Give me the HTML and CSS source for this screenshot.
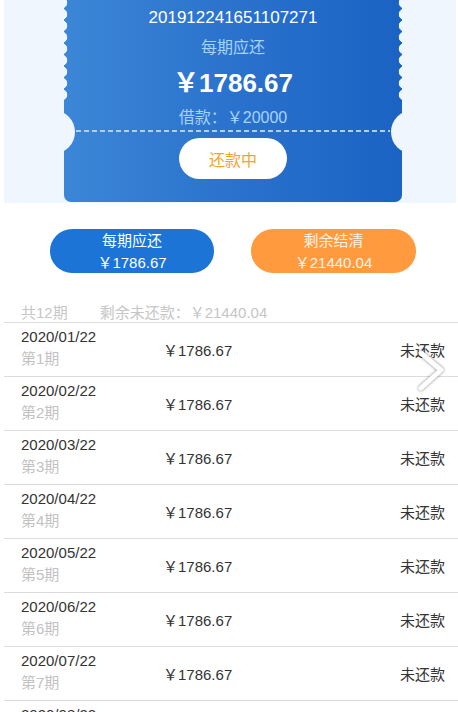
FILE: index.html
```html
<!DOCTYPE html>
<html lang="zh">
<head>
<meta charset="utf-8">
<link rel="stylesheet" href="styles.css">
</head>
<body>
<div class="page">
  <div class="top">
    <div class="card">
      <span class="scallop scallop-left"></span>
      <span class="scallop scallop-right"></span>
      <span class="notch notch-left"></span>
      <span class="notch notch-right"></span>
      <div class="card-no">201912241651107271</div>
      <div class="card-label">每期应还</div>
      <div class="card-amount">￥1786.67</div>
      <div class="card-loan">借款：￥20000</div>
      <div class="card-dash"></div>
      <div class="card-status">还款中</div>
    </div>
  </div>

  <div class="actions">
    <div class="pill pill-blue"><span>每期应还</span><span>￥1786.67</span></div>
    <div class="pill pill-orange"><span>剩余结清</span><span>￥21440.04</span></div>
  </div>

  <div class="summary"><span>共12期</span><span>剩余未还款：￥21440.04</span></div>

  <div class="list">
    <div class="row"><div class="when"><div class="date">2020/01/22</div><div class="term">第1期</div></div><div class="amt">￥1786.67</div><div class="state">未还款</div></div>
    <div class="row"><div class="when"><div class="date">2020/02/22</div><div class="term">第2期</div></div><div class="amt">￥1786.67</div><div class="state">未还款</div></div>
    <div class="row"><div class="when"><div class="date">2020/03/22</div><div class="term">第3期</div></div><div class="amt">￥1786.67</div><div class="state">未还款</div></div>
    <div class="row"><div class="when"><div class="date">2020/04/22</div><div class="term">第4期</div></div><div class="amt">￥1786.67</div><div class="state">未还款</div></div>
    <div class="row"><div class="when"><div class="date">2020/05/22</div><div class="term">第5期</div></div><div class="amt">￥1786.67</div><div class="state">未还款</div></div>
    <div class="row"><div class="when"><div class="date">2020/06/22</div><div class="term">第6期</div></div><div class="amt">￥1786.67</div><div class="state">未还款</div></div>
    <div class="row"><div class="when"><div class="date">2020/07/22</div><div class="term">第7期</div></div><div class="amt">￥1786.67</div><div class="state">未还款</div></div>
    <div class="row"><div class="when"><div class="date">2020/08/22</div><div class="term">第8期</div></div><div class="amt">￥1786.67</div><div class="state">未还款</div></div>
  </div>

  <svg class="chevron" width="34" height="44" viewBox="0 0 34 44">
    <polyline points="7,4 27,21 7,39" fill="none" stroke="#ffffff" stroke-width="5" stroke-linecap="round" stroke-linejoin="round"/>
  </svg>
</div>
</body>
</html>
```

FILE: styles.css
```css
* { box-sizing: border-box; }
html, body { margin: 0; padding: 0; background: #ffffff; }
body {
  font-family: "Liberation Sans", Arial, "Noto Sans CJK SC", sans-serif;
  color: #333333;
  overflow: hidden;
}
.page { position: relative; width: 458px; }

.top {
  margin: 0 2px 0 4px;
  height: 203px;
  background: #eff6fd;
  display: flex;
  padding-left: 60px;
}
.card {
  position: relative;
  width: 338px;
  height: 202px;
  border-radius: 0 0 7px 7px;
  background: linear-gradient(90deg, #3c86d7 0%, #2a72cc 50%, #1a63c3 100%);
  display: flex;
  flex-direction: column;
  align-items: center;
  padding-top: 8px;
}
.scallop {
  position: absolute;
  top: -3px;
  width: 12px;
  height: 104px;
  background: radial-gradient(circle at 6px 50%, #eff6fd 5px, rgba(239,246,253,0) 5.6px);
  background-size: 12px 11.5px;
}
.scallop-left { left: -8px; }
.scallop-right { right: -8px; }
.notch {
  position: absolute;
  top: 110px;
  width: 44px;
  height: 44px;
  border-radius: 50%;
  background: #eff6fd;
}
.notch-left { left: -33px; }
.notch-right { right: -33px; }

.card-no {
  font-size: 17px;
  line-height: 20px;
  color: #ffffff;
}
.card-label {
  margin-top: 9px;
  font-size: 16px;
  line-height: 22px;
  color: #a6d3ff;
}
.card-amount {
  margin-top: 8px;
  font-size: 26px;
  line-height: 32px;
  font-weight: bold;
  color: #ffffff;
}
.card-loan {
  margin-top: 8px;
  font-size: 16px;
  line-height: 22px;
  color: #a6d3ff;
}
.card-dash {
  align-self: stretch;
  margin: 1px 12px 0;
  height: 2px;
  background: repeating-linear-gradient(90deg, #b0cff2 0 5px, rgba(176,207,242,0) 5px 8px);
}
.card-status {
  margin-top: 6px;
  width: 108px;
  height: 41px;
  border-radius: 21px;
  background: #ffffff;
  color: #f4a42a;
  font-size: 16px;
  display: flex;
  align-items: center;
  justify-content: center;
}

.actions {
  display: flex;
  gap: 37px;
  padding-left: 50px;
  margin-top: 26px;
}
.pill {
  width: 164px;
  height: 44px;
  border-radius: 22px;
  display: flex;
  flex-direction: column;
  align-items: center;
  justify-content: center;
  color: #ffffff;
  font-size: 15px;
  line-height: 22px;
  padding-top: 1px;
}
.pill-blue { background: #1b74d6; }
.pill-orange { background: #ff9a3e; width: 165px; color: #fff3e6; }

.summary {
  margin: 29px 0 0 4px;
  padding-left: 17px;
  height: 21px;
  line-height: 22px;
  font-size: 15px;
  color: #c6c6c6;
  border-bottom: 1px solid #dcdcdc;
  display: flex;
  gap: 32px;
}

.list { margin-left: 4px; }
.row {
  height: 54px;
  border-bottom: 1px solid #dcdcdc;
  display: flex;
  align-items: center;
  padding: 0 13px 0 17px;
}
.when {
  width: 142px;
  align-self: flex-start;
  padding-top: 4px;
}
.date { font-size: 15px; line-height: 20px; color: #333333; }
.term { margin-top: 2px; font-size: 15px; line-height: 20px; color: #c2c2c2; }
.amt { flex: 1; font-size: 15px; color: #333333; }
.state { font-size: 15px; color: #333333; }

.chevron {
  position: absolute;
  left: 414px;
  top: 349px;
  filter: drop-shadow(0 0 1.5px rgba(0,0,0,0.5));
}
```
